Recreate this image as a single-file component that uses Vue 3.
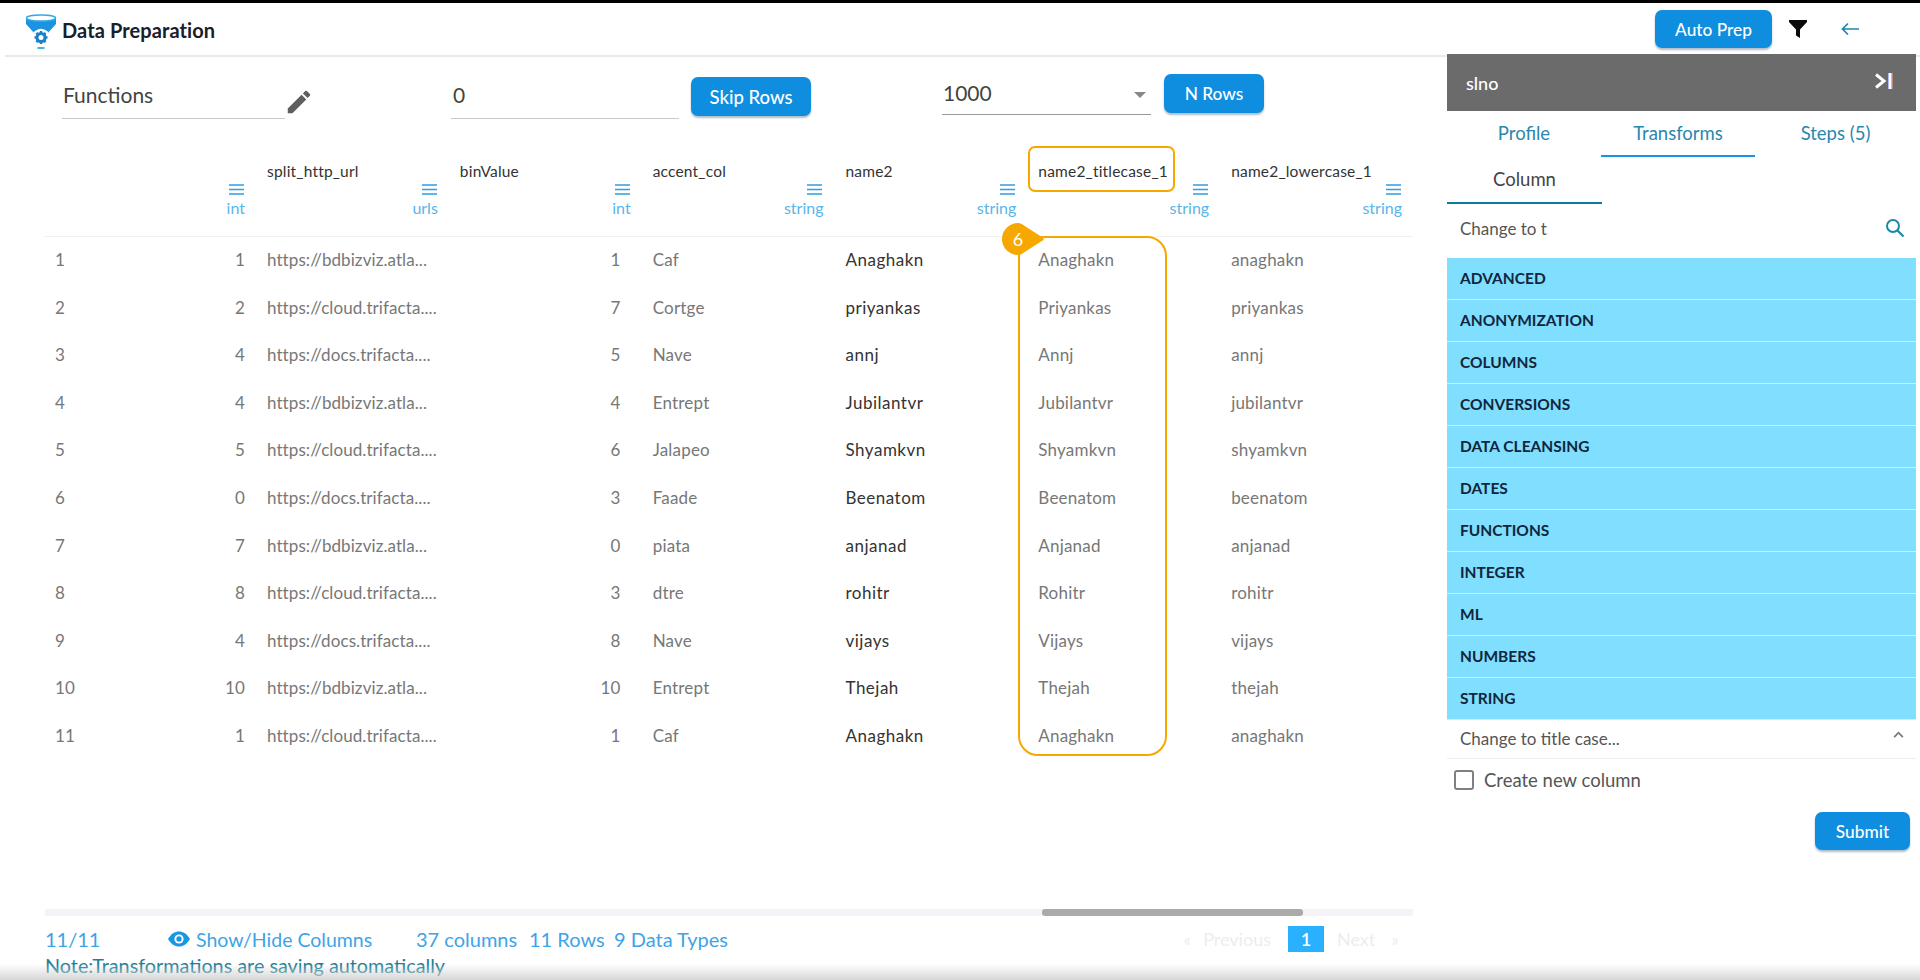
<script setup>
const names = ['Anaghakn','priyankas','annj','Jubilantvr','Shyamkvn','Beenatom','anjanad','rohitr','vijays','Thejah','Anaghakn']
const titles = ['Anaghakn','Priyankas','Annj','Jubilantvr','Shyamkvn','Beenatom','Anjanad','Rohitr','Vijays','Thejah','Anaghakn']
const lowers = ['anaghakn','priyankas','annj','jubilantvr','shyamkvn','beenatom','anjanad','rohitr','vijays','thejah','anaghakn']
const slno = [1,2,4,4,5,0,7,8,4,10,1]
const urls = ['https://bdbizviz.atla...','https://cloud.trifacta....','https://docs.trifacta....']
const bins = [1,7,5,4,6,3,0,3,8,10,1]
const accents = ['Caf','Cortge','Nave','Entrept','Jalapeo','Faade','piata','dtre','Nave','Entrept','Caf']
const rows = names.map((n, i) => ({
  idx: i + 1, slno: slno[i], url: urls[i % 3], bin: bins[i], accent: accents[i], name: n, title: titles[i], lower: lowers[i]
}))
const heads = [
  { name: '', type: 'int' },
  { name: 'split_http_url', type: 'urls' },
  { name: 'binValue', type: 'int' },
  { name: 'accent_col', type: 'string' },
  { name: 'name2', type: 'string' },
  { name: 'name2_titlecase_1', type: 'string' },
  { name: 'name2_lowercase_1', type: 'string' }
]
const groups = ['ADVANCED','ANONYMIZATION','COLUMNS','CONVERSIONS','DATA CLEANSING','DATES','FUNCTIONS','INTEGER','ML','NUMBERS','STRING']
</script>

<template>
  <div class="page">
    <header class="top">
      <svg class="logo" viewBox="0 0 32 36" width="32" height="36">
        <path d="M1 4 C1 7 31 7 31 4 L31 10 L22 20 L10 20 L1 10 Z" fill="#1c92e2"/>
        <ellipse cx="16" cy="4" rx="14.5" ry="3" fill="#fff" stroke="#35a8ee" stroke-width="1.4"/>
        <circle cx="16" cy="23.500" r="8.800" fill="#fff"/>
        <g fill="none" stroke="#1c7fc9">
          <circle cx="16" cy="23.500" r="4" stroke-width="3"/>
          <path d="M16 17v3M16 27v3M9.500 23.500h3M19.500 23.500h3M11.400 18.900l2 2M18.600 26.100l2 2M20.600 18.900l-2 2M13.400 26.100l-2 2" stroke-width="2.400"/>
        </g>
        <path d="M12.500 34h7" stroke="#35a8ee" stroke-width="1.800"/>
      </svg>
      <span class="app-title">Data Preparation</span>
      <button class="btn auto">Auto Prep</button>
      <svg class="filter" viewBox="0 0 18 18" width="18" height="18"><path d="M0 0h18v2L11 9.5V18L7 15.5V9.500L0 2z" fill="#0a0a0a"/></svg>
      <svg class="back" viewBox="0 0 18 14" width="18" height="14"><path d="M18 7H2M7 1.500L1.500 7 7 12.500" fill="none" stroke="#1c87a8" stroke-width="1.700"/></svg>
    </header>

    <div class="body">
      <main class="main">
        <div class="toolbar">
          <div class="field fn">Functions</div>
          <svg class="pencil" viewBox="0 0 24 24" width="30" height="30"><path d="M3 17.250V21h3.750L17.810 9.940l-3.750-3.750L3 17.250zM20.710 7.040a1 1 0 0 0 0-1.410l-2.340-2.340a1 1 0 0 0-1.410 0l-1.830 1.830 3.750 3.750 1.830-1.830z" fill="#5f5f5f"/></svg>
          <div class="field skip">0</div>
          <button class="btn skipbtn">Skip Rows</button>
          <div class="field sel">1000<i class="caret"></i></div>
          <button class="btn nrows">N Rows</button>
        </div>

        <div class="tablewrap">
          <div class="table">
            <div class="tr thead">
              <div class="c idx"></div>
              <div v-for="h in heads" :key="h.name" class="c hc" :class="{ first: !h.name }">
                <span class="hname">{{ h.name }}</span>
                <svg class="menu" viewBox="0 0 15 11" width="15" height="11"><path d="M0 1h15M0 5.500h15M0 10h15" stroke="#2d9fe3" stroke-width="1.300"/></svg>
                <span class="htype">{{ h.type }}</span>
              </div>
            </div>
            <div v-for="r in rows" :key="r.idx" class="tr">
              <div class="c idx">{{ r.idx }}</div>
              <div class="c num first">{{ r.slno }}</div>
              <div class="c url">{{ r.url }}</div>
              <div class="c num">{{ r.bin }}</div>
              <div class="c">{{ r.accent }}</div>
              <div class="c strong">{{ r.name }}</div>
              <div class="c">{{ r.title }}</div>
              <div class="c">{{ r.lower }}</div>
            </div>
          </div>
          <div class="mark-head"></div>
          <div class="mark-col"></div>
          <div class="badge">
            <svg viewBox="0 0 42 32" width="42" height="32"><path d="M16 0 Q18 0 20 1.200 L41 14.700 Q42.500 16 41 17.300 L20 30.800 Q18 32 16 32 A16 16 0 0 1 16 0Z" fill="#f7a800"/></svg>
            <span>6</span>
          </div>
        </div>

        <div class="scroll"><div class="thumb"></div></div>

        <div class="foot">
          <span class="count">11/11</span>
          <svg class="eye" viewBox="0 0 22 16" width="22" height="16"><path d="M0 8C3 2.800 6.800 0.500 11 0.500S19 2.800 22 8c-3 5.200-6.800 7.500-11 7.500S3 13.200 0 8z" fill="#1a97e3"/><circle cx="11" cy="8" r="4.600" fill="#fff"/><circle cx="11" cy="8" r="2.700" fill="#1a97e3"/></svg>
          <span class="sh">Show/Hide Columns</span>
          <span class="m1">37 columns</span>
          <span class="m2">11 Rows</span>
          <span class="m3">9 Data Types</span>
          <nav class="pager">
            <span>«</span><span class="prev">Previous</span><b>1</b><span class="next">Next</span><span class="last">»</span>
          </nav>
        </div>
        <div class="note">Note:Transformations are saving automatically</div>
      </main>

      <aside class="side">
        <div class="side-head">
          <span>slno</span>
          <svg viewBox="0 0 20 16" width="20" height="16"><path d="M2 1.500L10 8 2 14.500" fill="none" stroke="#fff" stroke-width="3"/><rect x="14" y="0" width="1" height="16" fill="#aeb8ff"/><rect x="15" y="0" width="2" height="16" fill="#fff"/><rect x="17" y="0" width="1.500" height="16" fill="#ffa6a6"/></svg>
        </div>
        <div class="tabs">
          <span class="tab">Profile</span>
          <span class="tab on">Transforms</span>
          <span class="tab">Steps (5)</span>
        </div>
        <div class="subtab"><span>Column</span></div>
        <div class="search">
          <span>Change to t</span>
          <svg viewBox="0 0 20 20" width="20" height="20"><circle cx="8" cy="8" r="6" fill="none" stroke="#1c87a8" stroke-width="2"/><path d="M12.500 12.500l6 6" stroke="#1c87a8" stroke-width="2.200"/></svg>
        </div>
        <ul class="groups">
          <li v-for="g in groups" :key="g">{{ g }}</li>
        </ul>
        <div class="fn-row">
          <span>Change to title case...</span>
          <svg viewBox="0 0 12 8" width="11" height="7"><path d="M1 7l5-5 5 5" fill="none" stroke="#777" stroke-width="2"/></svg>
        </div>
        <label class="check"><i></i><span>Create new column</span></label>
        <div class="submit-row"><button class="btn submit">Submit</button></div>
      </aside>
    </div>
    <div class="shade"></div>
  </div>
</template>

<style scoped>
.page {
  position: relative;
  width: 1920px;
  height: 980px;
  overflow: hidden;
  display: flex;
  flex-direction: column;
  background: #fff;
  border-top: 3px solid #000;
  box-sizing: border-box;
  font-family: Lato, "Noto Sans", sans-serif;
  color: #555;
}
.top {
  height: 52px;
  margin-left: 5px;
  border-bottom: 2px solid #e9e9e9;
  box-sizing: content-box;
  display: flex;
  align-items: center;
  padding-left: 20px;
  flex: none;
}
.logo { margin-top: 5px; flex: none; }
.app-title { margin: 2px 0 0 5px; font-size: 20px; font-weight: 700; color: #17202a; letter-spacing: 0.1px; }
.btn {
  border: 0;
  border-radius: 7px;
  background: #0f8ddf;
  color: #fff;
  font: 500 17.300px Lato, "Noto Sans", sans-serif;
  box-shadow: 0 2px 2px rgba(60, 90, 120, .4);
  padding: 0;
}
.auto { margin-left: auto; width: 117px; height: 38px; }
.filter { margin-left: 17px; }
.back { margin-left: 34px; margin-right: 61px; }
.body { flex: 1; display: flex; min-height: 0; }
.main { width: 1447px; flex: none; padding-left: 45px; box-sizing: border-box; }
.toolbar { height: 73px; display: flex; align-items: flex-start; }
.field {
  border-bottom: 1px solid #c9c9c9;
  font-size: 21px;
  color: #444;
  box-sizing: border-box;
}
.fn { width: 223px; margin: 25px 0 0 17px; height: 37px; padding-left: 1px; }
.pencil { margin: 30px 0 0 -1px; }
.skip { width: 228px; margin: 25px 0 0 137px; height: 37px; padding-left: 2px; }
.skipbtn { width: 120px; height: 39px; margin: 20px 0 0 12px; font-size: 18.500px; }
.sel {
  position: relative;
  width: 209px;
  margin: 23px 0 0 131px;
  height: 35px;
  border-bottom: 1px solid #999;
  padding-left: 1px;
}
.caret {
  position: absolute;
  right: 5px;
  top: 12px;
  border: 6px solid transparent;
  border-top: 6px solid #888;
  border-bottom: 0;
}
.nrows { width: 100px; height: 39px; margin: 17px 0 0 13px; }
.tablewrap { position: relative; height: 776px; }
.table { width: 1368px; }
.tr {
  display: grid;
  grid-template-columns: 60px 151px repeat(6, 192.830px);
  height: 47.550px;
  padding-bottom: 2px;
  box-sizing: border-box;
  align-items: center;
  font-size: 17px;
  letter-spacing: .2px;
  color: #777;
}
.tr.thead {
  height: 107px;
  padding-bottom: 0;
  border-bottom: 1px solid #f1f1f1;
  align-items: start;
  letter-spacing: 0;
}
.c { padding: 0 11px; white-space: nowrap; overflow: hidden; }
.idx { padding-left: 10px; }
.num { text-align: right; padding-right: 21px; }
.num.first { padding-right: 11px; }
.url { letter-spacing: .08px; }
.strong { color: #333; letter-spacing: .5px; }
.hc {
  position: relative;
  height: 100px;
  color: #333;
  font-size: 15.500px;
  padding-top: 32px;
  box-sizing: border-box;
}
.hname { display: block; line-height: 18px; height: 18px; letter-spacing: .2px; }
.menu { position: absolute; right: 12px; top: 54px; }
.htype { position: absolute; right: 11px; top: 68px; font-size: 16px; color: #59b5ea; }
.hc.first { padding-left: 0; }
.mark-head {
  position: absolute;
  left: 983px;
  top: 16px;
  width: 147px;
  height: 46px;
  border: 2px solid #f7a800;
  border-radius: 7px;
  box-sizing: border-box;
}
.mark-col {
  position: absolute;
  left: 973px;
  top: 106px;
  width: 149px;
  height: 520px;
  border: 2px solid #f7a800;
  border-radius: 20px;
  box-sizing: border-box;
}
.badge {
  position: absolute;
  left: 957px;
  top: 93px;
  width: 42px;
  height: 32px;
  color: #fff;
  font-size: 18px;
}
.badge svg { display: block; }
.badge span {
  position: absolute;
  left: 0;
  top: 0;
  width: 32px;
  line-height: 32px;
  text-align: center;
}
.scroll {
  width: 1368px;
  height: 7px;
  background: #f5f3f7;
  margin-top: 3px;
  display: flex;
}
.thumb { width: 261px; margin-left: 997px; background: #aaa; border-radius: 3px; }
.foot {
  display: flex;
  align-items: center;
  height: 28px;
  margin-top: 9px;
  font-size: 20px;
  color: #3ea4e6;
  white-space: nowrap;
}
.count { width: 106px; flex: none; }
.eye { flex: none; margin-left: 17px; }
.sh { margin-left: 6px; width: 220px; font-size: 19.500px; }
.m1 { width: 102px; }
.m2 { margin-left: 11px; width: 75px; }
.m3 { margin-left: 10px; }
.pager {
  margin-left: auto;
  margin-right: 48px;
  display: flex;
  align-items: center;
  color: #ededed;
  font-size: 18px;
}
.prev { margin-left: 12px; }
.pager b {
  width: 36px;
  height: 26px;
  margin: 0 13px 0 17px;
  background: #29b0ff;
  color: #fff;
  font-weight: 600;
  text-align: center;
  line-height: 26px;
}
.last { margin-left: 16px; }
.note { font-size: 19.800px; color: #1d7f9b; line-height: 24px; margin-top: 0; white-space: nowrap; }
.side { width: 469px; flex: none; margin-top: -3px; }
.side-head {
  height: 57px;
  background: #6b6b6b;
  display: flex;
  align-items: center;
  justify-content: space-between;
  padding: 0 22px 0 19px;
  color: #fff;
  font-size: 18px;
  font-weight: 500;
}
.side-head svg { margin-top: -3px; }
.tabs { display: flex; height: 46px; color: #2a87ad; font-size: 18.500px; }
.tab { width: 154px; text-align: center; line-height: 44px; box-sizing: border-box; }
.tab:last-child { width: 161px; }
.tab.on { border-bottom: 2px solid #1a93e2; }
.subtab {
  width: 155px;
  height: 47px;
  border-bottom: 2px solid #0c7ba1;
  box-sizing: border-box;
  text-align: center;
  line-height: 44px;
  font-size: 18.500px;
  color: #444;
}
.search {
  height: 54px;
  display: flex;
  align-items: center;
  justify-content: space-between;
  padding: 0 11px 6px 13px;
  box-sizing: border-box;
  font-size: 17px;
  color: #555;
}
.groups { list-style: none; margin: 0; padding: 0; }
.groups li {
  height: 42px;
  box-sizing: border-box;
  background: #80deff;
  border-bottom: 1px solid #c8eefc;
  padding-left: 13px;
  line-height: 41px;
  font-size: 15.500px;
  font-weight: 700;
  color: #10263c;
}
.fn-row {
  height: 39px;
  border-bottom: 1px solid #eee;
  display: flex;
  align-items: center;
  justify-content: space-between;
  padding: 0 12px 2px 13px;
  box-sizing: border-box;
  font-size: 17px;
  color: #555;
}
.fn-row svg { margin-top: -8px; }
.check {
  display: flex;
  align-items: center;
  height: 41px;
  padding-left: 7px;
  font-size: 18.500px;
  color: #555;
}
.check i {
  width: 20px;
  height: 20px;
  border: 2px solid #808080;
  border-radius: 3px;
  box-sizing: border-box;
  margin-right: 10px;
}
.submit-row { display: flex; justify-content: flex-end; padding: 12px 6px 0 0; }
.submit { width: 95px; height: 38px; }
.shade {
  position: absolute;
  left: 0;
  right: 0;
  bottom: 0;
  height: 16px;
  background: linear-gradient(rgba(210,210,210,0), rgba(210,210,210,.9));
  pointer-events: none;
}
</style>
